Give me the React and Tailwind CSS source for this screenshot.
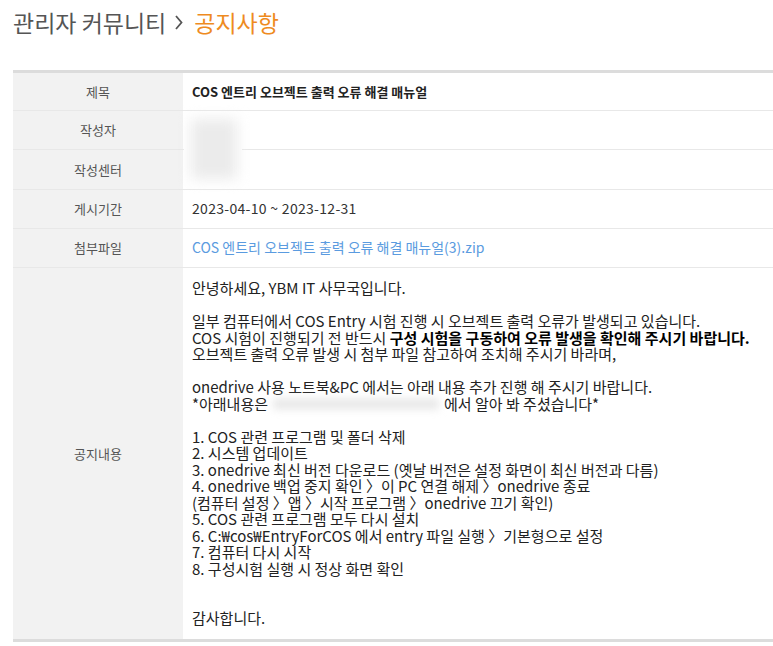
import React from 'react';

const font = { fontFamily: '"Noto Sans CJK KR", "Noto Sans", sans-serif' };

const rows = [
  { label: '제목', h: 'h-[38px]', value: <span className="text-[13px] font-bold text-[#222]">COS 엔트리 오브젝트 출력 오류 해결 매뉴얼</span> },
  { label: '작성자', h: 'h-[39.25px]', value: null },
  { label: '작성센터', h: 'h-[39.25px]', value: null },
  { label: '게시기간', h: 'h-[39.25px]', value: <span className="text-[14px] tracking-[0.3px] text-[#333]">2023-04-10 ~ 2023-12-31</span> },
  { label: '첨부파일', h: 'h-[39.25px]', value: <a className="text-[14px] text-[#5a9be0]">COS 엔트리 오브젝트 출력 오류 해결 매뉴얼(3).zip</a> },
];

const Blank = () => <div className="h-[16.5px]" />;

const App = () => {
  return (
    <div className="w-[773px] h-[646px] overflow-hidden bg-white pl-[13px]" style={font}>
      {/* Header */}
      <h1 className="pt-[6px] h-[70px] text-[23px] leading-[32px] text-[#555] flex items-start">
        <span>관리자 커뮤니티</span>
        <svg className="mt-[9px] ml-[9px] mr-[11px]" width="8" height="15" viewBox="0 0 8 15" fill="none">
          <path d="M1 1L6.5 7.5L1 14" stroke="#555" strokeWidth="1.8" />
        </svg>
        <span className="text-[#ee8b1f]">공지사항</span>
      </h1>

      <div className="relative border-t-[3px] border-b-[3px] border-[#dcdcdc]">
        {/* blurred name / center */}
        <div className="absolute left-[171px] top-[39px] w-[58px] h-[74px] bg-white" />
        <div className="absolute left-[178px] top-[46px] w-[46px] h-[60px] bg-[#ebebeb] blur-[7px]" />

        {rows.map((r, i) => (
          <div key={i} className={`flex ${r.h} border-b border-[#e8e8e8]`}>
            <div className="w-[170px] shrink-0 bg-[#f2f2f2] flex items-center justify-center text-[13px] text-[#555]">
              {r.label}
            </div>
            <div className="flex-1 flex items-center pl-[9px]">{r.value}</div>
          </div>
        ))}

        <div className="flex">
          <div className="w-[170px] shrink-0 bg-[#f2f2f2] flex items-center justify-center text-[13px] text-[#555]">
            공지내용
          </div>
          <div className="flex-1 pl-[9px] pt-[12px] pb-[12px] text-[15px] leading-[16.5px] text-[#222] whitespace-nowrap">
            <div>안녕하세요, YBM IT 사무국입니다.</div>
            <Blank />
            <div>일부 컴퓨터에서 COS Entry 시험 진행 시 오브젝트 출력 오류가 발생되고 있습니다.</div>
            <div>
              COS 시험이 진행되기 전 반드시 <b className="text-black">구성 시험을 구동하여 오류 발생을 확인해 주시기 바랍니다.</b>
            </div>
            <div>오브젝트 출력 오류 발생 시 첨부 파일 참고하여 조치해 주시기 바라며,</div>
            <Blank />
            <div>onedrive 사용 노트북&amp;PC 에서는 아래 내용 추가 진행 해 주시기 바랍니다.</div>
            <div className="flex items-center">
              <span>*아래내용은</span>
              <span className="relative inline-block w-[172px] h-[16px] mx-[2px]">
                <span className="absolute inset-[3px] bg-[#e6e6e6] blur-[4px]" />
              </span>
              <span>에서 알아 봐 주셨습니다*</span>
            </div>
            <Blank />
            <div>1. COS 관련 프로그램 및 폴더 삭제</div>
            <div>2. 시스템 업데이트</div>
            <div>3. onedrive 최신 버전 다운로드 (옛날 버전은 설정 화면이 최신 버전과 다름)</div>
            <div>4. onedrive 백업 중지 확인 〉이 PC 연결 해제 〉onedrive 종료</div>
            <div>(컴퓨터 설정 〉앱 〉시작 프로그램 〉onedrive 끄기 확인)</div>
            <div>5. COS 관련 프로그램 모두 다시 설치</div>
            <div>6. C:₩cos₩EntryForCOS 에서 entry 파일 실행 〉기본형으로 설정</div>
            <div>7. 컴퓨터 다시 시작</div>
            <div>8. 구성시험 실행 시 정상 화면 확인</div>
            <Blank />
            <Blank />
            <div>감사합니다.</div>
          </div>
        </div>
      </div>
    </div>
  );
};

export default App;
